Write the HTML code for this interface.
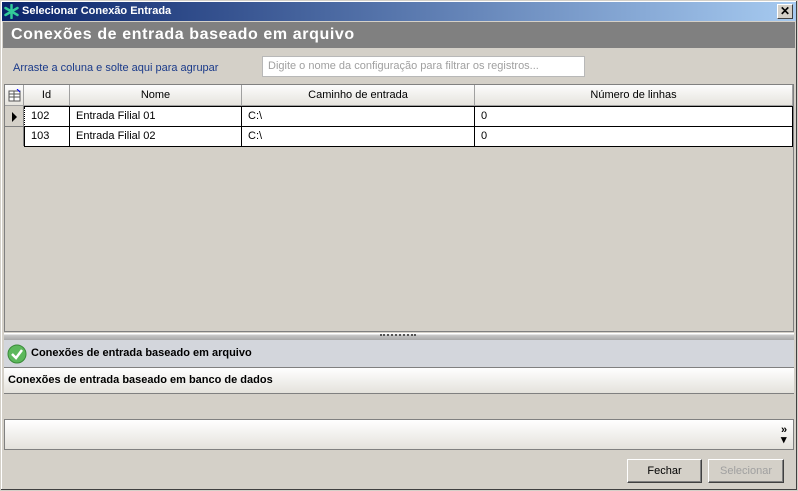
<!DOCTYPE html>
<html><head><style>
*{margin:0;padding:0;box-sizing:border-box}
body{width:798px;height:491px;background:#d4d0c8;font-family:"Liberation Sans",sans-serif;font-size:11px;position:relative;overflow:hidden}
.a{position:absolute}
.win{left:0;top:0;width:798px;height:491px;border:1px solid #d4d0c8;box-shadow:inset -1px -1px 0 #404040,inset 1px 1px 0 #fff}
.tb{left:2px;top:2px;width:794px;height:19px;background:linear-gradient(90deg,#0a246a,#a6caf0);color:#fff;font-weight:bold;font-size:11px;line-height:19px;padding-left:20px}
.hdr{left:3px;top:22px;width:792px;height:26px;background:#808080;color:#fff;font-weight:bold;font-size:16px;line-height:26px;padding-left:8px;letter-spacing:.6px}
.grid{left:4px;top:84px;width:790px;height:248px;border:1px solid #808080;background:#d4d0c8}
.th{top:0;height:21px;background:linear-gradient(#fcfcfc,#e6e4de);border-right:1px solid #a0a0a0;border-bottom:1px solid #a0a0a0;text-align:center;line-height:21px}
.cell{height:20px;line-height:19px;padding-left:6px;background:#fff;border-right:1px solid #000;border-bottom:1px solid #000}
.nav{left:4px;width:790px;border-bottom:1px solid #808080;font-weight:bold;font-size:11px;padding-left:5px}
.btn{top:459px;height:24px;border:1px solid;border-color:#fff #404040 #404040 #fff;box-shadow:inset -1px -1px 0 #808080;text-align:center;line-height:22px;background:#d4d0c8}
</style></head><body>
<div class="a win"></div>
<div class="a tb">Selecionar Conexão Entrada</div>
<svg class="a" style="left:4px;top:4px" width="15" height="15" viewBox="0 0 15 15"><g stroke="#3c9" stroke-width="2.5" stroke-linecap="round"><line x1="7.5" y1="1" x2="7.5" y2="14"/><line x1="1.5" y1="4" x2="13.5" y2="11"/><line x1="1.5" y1="11" x2="13.5" y2="4"/></g></svg>
<div class="a" style="left:777px;top:4px;width:16px;height:15px;background:#d4d0c8;border:1px solid;border-color:#fff #404040 #404040 #fff;font-weight:bold;font-size:12px;line-height:12px;text-align:center">✕</div>
<div class="a hdr">Conexões de entrada baseado em arquivo</div>
<div class="a" style="left:13px;top:62px;color:#1a3a8a">Arraste a coluna e solte aqui para agrupar</div>
<div class="a" style="left:262px;top:56px;width:323px;height:21px;background:#fff;border:1px solid #b8b8b8;color:#a0a0a0;line-height:19px;padding-left:5px">Digite o nome da configuração para filtrar os registros...</div>
<div class="a grid">
 <div class="a th" style="left:0;width:19px"></div>
 <svg class="a" style="left:3px;top:4px" width="14" height="13"><rect x="1" y="2" width="11" height="10" fill="#fff" stroke="#555"/><line x1="1" y1="5" x2="12" y2="5" stroke="#555"/><line x1="1" y1="8" x2="12" y2="8" stroke="#555"/><line x1="6" y1="2" x2="6" y2="12" stroke="#555"/><path d="M9 0 L12 3" stroke="#00f"/></svg>
 <div class="a th" style="left:19px;width:46px">Id</div>
 <div class="a th" style="left:65px;width:172px">Nome</div>
 <div class="a th" style="left:237px;width:233px">Caminho de entrada</div>
 <div class="a th" style="left:470px;width:318px">Número de linhas</div>
 <div class="a" style="left:0;top:21px;width:19px;height:40px;background:#d4d0c8;border-right:1px solid #808080"></div>
 <div class="a" style="left:0;top:41px;width:19px;height:1px;background:#808080"></div>
 <div class="a" style="left:7px;top:27px;width:0;height:0;border-left:5px solid #000;border-top:5px solid transparent;border-bottom:5px solid transparent"></div>
 <div class="a" style="left:19px;top:21px;width:769px;height:1px;background:#000"></div>
 <div class="a cell" style="left:19px;top:22px;width:46px;border-left:1px dotted #000">102</div>
 <div class="a cell" style="left:65px;top:22px;width:172px">Entrada Filial 01</div>
 <div class="a cell" style="left:237px;top:22px;width:233px">C:\</div>
 <div class="a cell" style="left:470px;top:22px;width:318px">0</div>
 <div class="a cell" style="left:19px;top:42px;width:46px;border-left:1px solid #000">103</div>
 <div class="a cell" style="left:65px;top:42px;width:172px">Entrada Filial 02</div>
 <div class="a cell" style="left:237px;top:42px;width:233px">C:\</div>
 <div class="a cell" style="left:470px;top:42px;width:318px">0</div>
</div>
<div class="a" style="left:4px;top:333px;width:790px;height:7px;background:linear-gradient(#fff 0,#fff 1px,#c8c8c8 2px,#a8a8a8 7px)"></div>
<div class="a" style="left:380px;top:334px;width:36px;height:2px;border-top:2px dotted #555"></div>
<div class="a nav" style="top:340px;height:28px;background:#d3d6dc;line-height:27px;padding-left:27px">Conexões de entrada baseado em arquivo</div>
<svg class="a" style="left:7px;top:344px" width="20" height="20"><circle cx="10" cy="10" r="9" fill="#5cb85c" stroke="#3a8a3a"/><path d="M5 10 L9 14 L15 6" fill="none" stroke="#fff" stroke-width="2.5"/></svg>
<div class="a nav" style="top:368px;height:26px;background:linear-gradient(#fff,#e4e2dc);line-height:25px;padding-left:4px">Conexões de entrada baseado em banco de dados</div>
<div class="a nav" style="top:394px;height:26px;background:#d4d0c8"></div>
<div class="a nav" style="top:420px;height:30px;background:linear-gradient(#fff,#e4e2dc);border-left:1px solid #808080;border-right:1px solid #808080"></div>
<div class="a" style="left:781px;top:425px;font-size:11px;font-weight:bold;line-height:10px">»<br>▾</div>
<div class="a btn" style="left:627px;width:75px">Fechar</div>
<div class="a btn" style="left:708px;width:76px;color:#a0a0a0">Selecionar</div>
</body></html>
